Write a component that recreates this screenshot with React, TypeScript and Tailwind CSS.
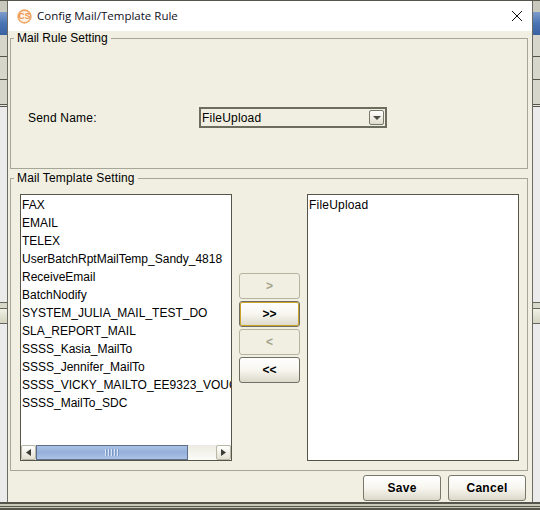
const templates = [
  'FAX',
  'EMAIL',
  'TELEX',
  'UserBatchRptMailTemp_Sandy_4818',
  'ReceiveEmail',
  'BatchNodify',
  'SYSTEM_JULIA_MAIL_TEST_DO',
  'SLA_REPORT_MAIL',
  'SSSS_Kasia_MailTo',
  'SSSS_Jennifer_MailTo',
  'SSSS_VICKY_MAILTO_EE9323_VOUCHER',
  'SSSS_MailTo_SDC',
];

function MoveButton({ label, state }: { label: string; state: 'off' | 'focus' | 'on' }) {
  if (state === 'off') {
    return (
      <button className="h-[26px] w-[61px] rounded-[3px] border border-[#b5b59f] bg-[#f1efe2] text-[12px] font-bold text-[#a3a38c]">
        {label}
      </button>
    );
  }
  return (
    <button
      className={`h-[26px] w-[61px] rounded-[3px] border border-[#6f6f63] bg-gradient-to-b from-white via-[#f7f6f0] to-[#dcd9c9] text-[12px] font-bold text-black ${
        state === 'focus' ? 'outline-1 -outline-offset-2 outline-[#c9a227]' : ''
      }`}
    >
      {label}
    </button>
  );
}

function ScrollArrow({ dir }: { dir: 'left' | 'right' }) {
  return (
    <div className="flex h-[15px] w-[15px] items-center justify-center rounded-[2px] border border-[#b8b6a4] bg-gradient-to-b from-white to-[#e4e1d2]">
      <svg width="5" height="7" viewBox="0 0 5 7">
        <path d={dir === 'left' ? 'M5 0V7L0 3.5Z' : 'M0 0V7L5 3.5Z'} fill="#3c3c36" />
      </svg>
    </div>
  );
}

// bits of the window behind the dialog
function BackStrip({ width }: { width: string }) {
  return (
    <div className={`flex flex-col ${width}`}>
      <div className="h-[11px] bg-[#c8c8bc]" />
      <div className="h-[23px] bg-gradient-to-b from-[#7f9ccb] via-[#4a74b4] to-[#3a62a2]" />
      <div className="h-[21px] bg-[#d6d6ca]" />
      <div className="h-px bg-[#55554c]" />
      <div className="h-[22px] bg-[#d6d6ca]" />
      <div className="h-px bg-[#55554c]" />
      <div className="h-[24px] bg-[#d6d6ca]" />
      <div className="h-px bg-[#55554c]" />
      <div className="h-px bg-[#e8e8e0]" />
      <div className="h-px bg-[#55554c]" />
      <div className="h-[195px] bg-[#ebebeb]" />
      <div className="h-px bg-[#66665c]" />
      <div className="h-[5px] bg-[#d8d8c8]" />
      <div className="h-px bg-[#66665c]" />
      <div className="h-[14px] bg-gradient-to-b from-[#f0f0e4] to-[#d4d4c2]" />
      <div className="h-px bg-[#66665c]" />
      <div className="flex-1 bg-[#ebebeb]" />
    </div>
  );
}

export default function App() {
  return (
    <div className="flex h-[510px] w-[540px] flex-col overflow-hidden bg-[#55554c] font-['Liberation_Sans',sans-serif] text-[12px] text-black">
      <div className="flex h-[502px] pt-px">
        <BackStrip width="w-[7px]" />

        <div className="flex w-[526px] flex-col border-x border-[#6a6a62] bg-[#f1efe2]">
          <div className="flex h-[30px] items-center bg-white pr-[9px] pl-[9px]">
            <svg width="15" height="15" viewBox="0 0 15 15" className="mr-[5px]">
              <circle cx="7.5" cy="7.5" r="6.4" fill="#fdf0e2" stroke="#f2a766" strokeWidth="1.6" />
              <text x="7.5" y="10.4" textAnchor="middle" fontSize="8.5" fontWeight="700" fill="#ec9348">
                CS
              </text>
            </svg>
            <span className="font-['Open_Sans',sans-serif] text-[11.5px] text-[#10101c]">Config Mail/Template Rule</span>
            <svg width="12" height="12" viewBox="0 0 12 12" className="ml-auto">
              <path d="M1 1L11 11M11 1L1 11" stroke="#111" strokeWidth="1" fill="none" />
            </svg>
          </div>

          <div className="flex flex-1 flex-col px-[2px]">
            <fieldset className="h-[138px] w-[518px] border border-[#a5a598]">
              <legend className="ml-[3px] px-[3px] leading-[14px]">Mail Rule Setting</legend>
              <div className="mt-[62px] flex items-center pl-[17px]">
                <span className="w-[171px] tracking-[0.2px]">Send Name:</span>
                <div className="flex h-[21px] w-[188px] items-center justify-between border-2 border-[#6d6d5f] pr-px pl-[1px]">
                  <span className="tracking-[0.2px]">FileUpload</span>
                  <div className="flex h-[15px] w-[15px] items-center justify-center rounded-[2px] border border-[#77776a] bg-gradient-to-b from-white to-[#e0ddce]">
                    <svg width="8" height="4" viewBox="0 0 8 4">
                      <path d="M0 0H8L4 4Z" fill="#4c4c44" />
                    </svg>
                  </div>
                </div>
              </div>
            </fieldset>

            <fieldset className="mt-[2px] h-[300px] w-[518px] border border-[#a5a598]">
              <legend className="ml-[3px] px-[3px] leading-[14px] tracking-[0.15px]">Mail Template Setting</legend>
              <div className="mt-[9px] flex pl-[9px]">
                <div className="flex h-[267px] w-[212px] flex-col border border-[#55554a] bg-white">
                  <div className="flex-1 overflow-hidden pt-px pl-px">
                    {templates.map((name) => (
                      <div key={name} className="h-[18px] whitespace-nowrap leading-[18px]">
                        {name}
                      </div>
                    ))}
                  </div>
                  <div className="flex h-[15px] bg-gradient-to-b from-[#ecebe2] to-[#fbfbf8]">
                    <ScrollArrow dir="left" />
                    <div className="flex w-[152px] items-center justify-center gap-px border border-[#5f6f8a] bg-gradient-to-b from-[#a9c1e4] via-[#94b0db] to-[#aac3e6]">
                      {[0, 1, 2, 3, 4].map((i) => (
                        <span key={i} className="mr-px h-[7px] w-[1px] bg-[#d8e3f4] shadow-[1px_0_0_#7c98c4]" />
                      ))}
                    </div>
                    <div className="flex-1" />
                    <ScrollArrow dir="right" />
                  </div>
                </div>

                <div className="flex w-[75px] flex-col items-center gap-[2px] pt-[79px]">
                  <MoveButton label=">" state="off" />
                  <MoveButton label=">>" state="focus" />
                  <MoveButton label="<" state="off" />
                  <MoveButton label="<<" state="on" />
                </div>

                <div className="h-[267px] w-[212px] border border-[#55554a] bg-white pt-px pl-px">
                  <div className="h-[18px] leading-[18px] tracking-[0.2px]">FileUpload</div>
                </div>
              </div>
            </fieldset>

            <div className="mt-[4px] flex justify-end gap-[7px] pr-[4px]">
              <button className="h-[26px] w-[78px] rounded-[3px] border border-[#77776a] bg-gradient-to-b from-white via-[#f7f6f0] to-[#dcd9c9] font-bold tracking-[0.3px]">
                Save
              </button>
              <button className="h-[26px] w-[78px] rounded-[3px] border border-[#77776a] bg-gradient-to-b from-white via-[#f7f6f0] to-[#dcd9c9] font-bold tracking-[0.3px]">
                Cancel
              </button>
            </div>
          </div>
        </div>

        <BackStrip width="w-[7px]" />
      </div>
      <div className="mt-[2px] h-[2px] bg-[#c9c9b8]" />
      <div className="mt-px h-px bg-[#c9c9b8]" />
    </div>
  );
}
